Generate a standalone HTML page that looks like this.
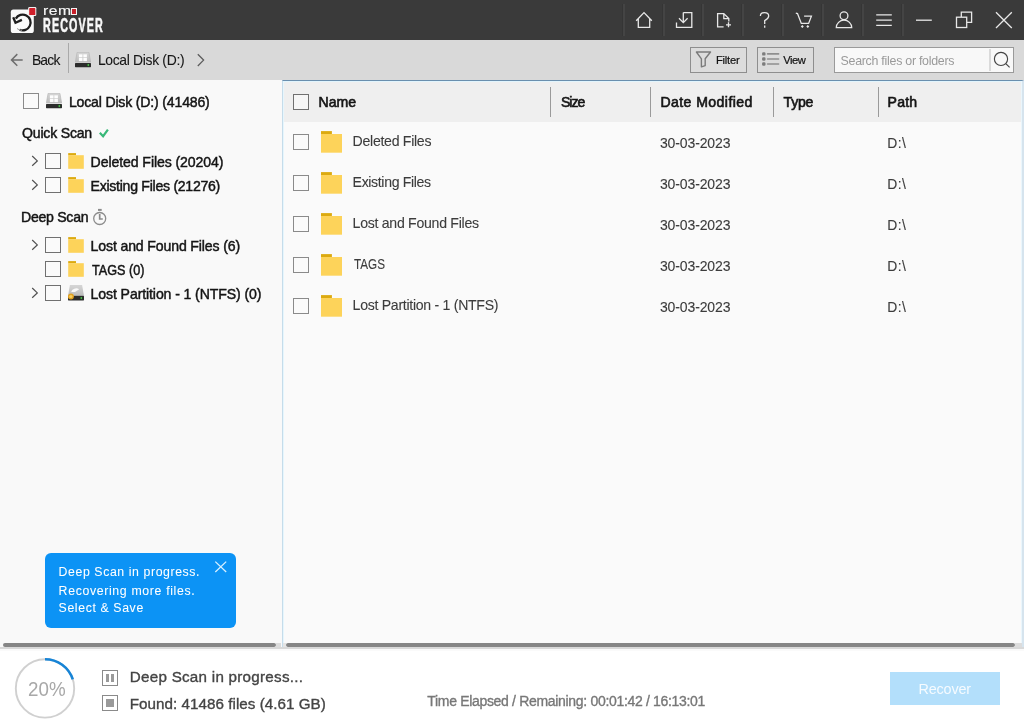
<!DOCTYPE html>
<html><head><meta charset="utf-8">
<style>
*{margin:0;padding:0;box-sizing:border-box}
html,body{width:1024px;height:728px;overflow:hidden;background:#fff;font-family:"Liberation Sans",sans-serif}
#wrap{position:absolute;left:0;top:0;width:1024px;height:728px;will-change:transform}
.a{position:absolute}
.t{position:absolute;white-space:nowrap;line-height:20px}
#top{left:0;top:0;width:1024px;height:40px;background:#3a3a3a}
.sep{position:absolute;top:4px;width:2px;height:32px;background:#444;box-shadow:-1px 0 0 #353535}
#tool{left:0;top:40px;width:1024px;height:40px;background:#d9d9d9}
#left{left:0;top:80px;width:282px;height:569px;background:#f9f9f9}
#right{left:282px;top:80px;width:742px;height:569px;background:#fafafa;border-left:1px solid #c6dcea;border-top:1px solid #6a8fae;border-right:2px solid #d6e4ee}
#hdr{left:284px;top:82px;width:737px;height:40px;background:#efefef}
.cb{position:absolute;width:16px;height:16px;border:1px solid #8a8a8a;background:#fafafa}
.hsep{position:absolute;top:87px;width:1px;height:30px;background:#9a9a9a}
.hd{position:absolute;font-weight:bold;font-size:13.6px;color:#1e1e1e;white-space:nowrap;line-height:20px}
.rn{position:absolute;font-size:13.5px;color:#3a3a3a;white-space:nowrap;line-height:20px}
.dt{position:absolute;font-size:14px;color:#3a3a3a;white-space:nowrap;line-height:20px}
.tr{position:absolute;font-size:13.6px;color:#1a1a1a;white-space:nowrap;line-height:20px;-webkit-text-stroke:0.2px #1a1a1a}
.fold{position:absolute;width:22px;height:22px}
.chev{position:absolute}
</style></head><body><div id="wrap">

<!-- top bar -->
<div id="top" class="a"></div>
<div class="sep" style="left:623px"></div>
<div class="sep" style="left:663px"></div>
<div class="sep" style="left:702px"></div>
<div class="sep" style="left:742px"></div>
<div class="sep" style="left:782px"></div>
<div class="sep" style="left:822px"></div>
<div class="sep" style="left:862px"></div>
<div class="sep" style="left:902px"></div>

<!-- logo -->
<svg class="a" style="left:0;top:0" width="120" height="40" viewBox="0 0 120 40">
  <rect x="10.8" y="9.6" width="23" height="23.4" rx="2.6" fill="#fafafa"/>
  <rect x="28.2" y="7.1" width="8.1" height="8.9" rx="1.2" fill="#f2f2f2"/>
  <rect x="29.2" y="8.1" width="6.1" height="6.9" rx="0.6" fill="#cf1f2a"/>
  <path d="M15.8 18.6 A7.9 7.9 0 1 1 19.6 29.8" fill="none" stroke="#1e1e1e" stroke-width="2.3"/>
  <path d="M13.2 17.3 L15.5 22.7 L21.9 19.9" fill="none" stroke="#1e1e1e" stroke-width="2.3" stroke-linejoin="miter"/>
  <path d="M17 28.5 Q19 30.2 22 30.4" fill="none" stroke="#9a9a9a" stroke-width="1"/>
</svg>
<div class="t" style="left:43.3px;top:1.3px;font-size:12.6px;color:#f6f6f6;line-height:20px;transform:scaleX(1.25);transform-origin:0 0;-webkit-text-stroke:0.15px #f6f6f6;letter-spacing:0.4px">rem</div>
<div class="a" style="left:71.3px;top:7.7px;width:6.2px;height:7.1px;border:1.2px solid #f4f4f4;background:#c8202a"></div>
<div class="t" style="left:43px;top:12.6px;font-size:19.4px;font-weight:bold;color:#f8f8f8;line-height:24px;transform:scaleX(0.555);transform-origin:0 0;-webkit-text-stroke:0.55px #f8f8f8;letter-spacing:2px">RECOVER</div>

<!-- top icons -->
<svg class="a" style="left:600px;top:0" width="424" height="40" viewBox="600 0 424 40" fill="none" stroke="#e8e8e8" stroke-width="1.3">
  <!-- home -->
  <path d="M636.2 20.8 L644 12.6 L651.8 20.8 M638.3 18.6 V27.4 H649.7 V18.6"/>
  <!-- download box -->
  <path d="M683.3 12.6 H691.8 V27.4 H676.5 V22.6"/>
  <path d="M683.3 12.6 V22.6 M679 18.3 L683.3 22.6 L687.6 18.3"/>
  <!-- file plus -->
  <path d="M723.6 26.8 H717.6 V13.6 H723.8 L728.8 18.6 V21.4 M723.8 13.6 V18.6 H728.8"/>
  <path d="M728.5 22.3 V27.2 M726 24.8 H731"/>
  <!-- question -->
  <path d="M760.4 16 Q760.4 12.6 764.5 12.6 Q768.7 12.6 768.7 16 Q768.7 18.4 764.7 20.6 V24"/>
  <path d="M764.7 25.6 V27.8"/>
  <!-- cart -->
  <path d="M795.8 13.1 L797.5 13.5 L801.3 23.4 H808.6 L811.4 16.2 H804.1"/>
  <path d="M802.3 25.1 L803.8 26.6 L802.3 28.1 L800.8 26.6 Z M807.8 25.1 L809.3 26.6 L807.8 28.1 L806.3 26.6 Z" fill="#e8e8e8" stroke="none"/>
  <!-- person -->
  <circle cx="844" cy="15.8" r="3.9"/>
  <path d="M836.3 27.6 A7.7 7.4 0 0 1 851.7 27.6 Z"/>
  <!-- menu -->
  <path d="M876.2 14.9 H891.8 M876.2 20.1 H891.8 M876.2 25.3 H891.8"/>
  <!-- minimize -->
  <path d="M916 20.2 H931.8"/>
  <!-- restore -->
  <path d="M961.3 17 V12.2 H971.6 V22.4 H966.8"/>
  <rect x="956.5" y="17.2" width="10.2" height="10.3"/>
  <!-- close -->
  <path d="M996 12.2 L1011.8 28 M1011.8 12.2 L996 28"/>
</svg>

<!-- toolbar -->
<div id="tool" class="a"></div>
<svg class="a" style="left:0;top:40px" width="220" height="40" viewBox="0 40 220 40" fill="none">
  <path d="M22.7 59.9 H12 M17.3 54.1 L11.5 59.9 L17.3 65.7" stroke="#6e6e6e" stroke-width="1.5"/>
  <path d="M197.8 54.2 L203.6 60.1 L197.8 66" stroke="#5c5c5c" stroke-width="1.3"/>
</svg>
<div class="a" style="left:68px;top:43px;width:1px;height:30px;background:#a9a9a9"></div>
<!-- disk icon toolbar -->
<svg class="a" style="left:75.1px;top:52px" width="16" height="16" viewBox="0 0 16 16">
  <defs><linearGradient id="dg1" x1="0" y1="0" x2="0" y2="1"><stop offset="0" stop-color="#d6d6d6"/><stop offset="1" stop-color="#bdbdbd"/></linearGradient></defs>
  <path d="M2.1 0.3 H13.9 L15.7 10.1 H0.3 Z" fill="url(#dg1)" stroke="#b4b4b4" stroke-width="0.6"/>
  <rect x="3.9" y="2.3" width="3.6" height="3.1" fill="#fdfdfd"/>
  <rect x="8.3" y="2.3" width="3.6" height="3.1" fill="#fdfdfd"/>
  <rect x="3.9" y="6" width="3.6" height="3.1" fill="#fdfdfd"/>
  <rect x="8.3" y="6" width="3.6" height="3.1" fill="#fdfdfd"/>
  <rect x="0" y="11" width="16" height="4.2" rx="0.6" fill="#2c2c2c"/>
  <circle cx="13.3" cy="13.1" r="1.3" fill="#1f5f1f"/>
  <circle cx="13.3" cy="13.1" r="0.75" fill="#6fdc6f"/>
</svg>

<!-- filter / view -->
<div class="a" style="left:690px;top:47px;width:57px;height:26px;border:1px solid #8e8e8e;background:#dcdcdc"></div>
<svg class="a" style="left:694px;top:50px" width="20" height="20" viewBox="694 50 20 20" fill="none" stroke="#7a7a7a" stroke-width="1.4">
  <path d="M696.4 52 H710.5 L705.2 58.8 V65.6 L701.4 66.8 V58.8 Z" stroke-linejoin="round"/>
</svg>
<div class="a" style="left:757px;top:47px;width:57px;height:26px;border:1px solid #8e8e8e;background:#dcdcdc"></div>
<svg class="a" style="left:760px;top:50px" width="22" height="20" viewBox="760 50 22 20">
  <rect x="762.1" y="52.2" width="3.4" height="3.4" rx="1.2" fill="#7c7c7c"/>
  <rect x="762.1" y="57.3" width="3.4" height="3.4" rx="1.2" fill="#7c7c7c"/>
  <rect x="762.1" y="62.3" width="3.4" height="3.4" rx="1.2" fill="#7c7c7c"/>
  <path d="M767.6 53.9 H778.6 M767.6 59 H778.6 M767.6 64 H778.6" stroke="#8e8e8e" stroke-width="1.6" stroke-linecap="round"/>
</svg>

<!-- search -->
<div class="a" style="left:834px;top:47px;width:180px;height:26px;border:1px solid #9a9a9a;background:#f8f8f8"></div>
<div class="a" style="left:989.2px;top:49px;width:1.6px;height:22px;background:#dadada"></div>
<svg class="a" style="left:990px;top:48px" width="24" height="24" viewBox="990 48 24 24" fill="none" stroke="#444" stroke-width="1.15">
  <circle cx="1001" cy="58.9" r="6.6"/>
  <path d="M1005.8 63.6 L1009.6 67.4"/>
</svg>

<!-- panels -->
<div id="left" class="a"></div>
<div id="right" class="a"></div>
<div id="hdr" class="a"></div>
<div class="a" style="left:283px;top:81px;width:739px;height:1px;background:#e2f5fd"></div>
<div class="a" style="left:283px;top:81px;width:1px;height:562px;background:#e6f6fd"></div>
<div class="a" style="left:1021px;top:81px;width:1px;height:562px;background:#eaf6fc"></div>

<!-- left tree -->
<div class="cb" style="left:23px;top:93px;border-color:#8a8a8a"></div>
<svg class="a" style="left:46px;top:93px" width="16" height="16" viewBox="0 0 16 16">
  <defs><linearGradient id="dg2" x1="0" y1="0" x2="0" y2="1"><stop offset="0" stop-color="#d6d6d6"/><stop offset="1" stop-color="#bdbdbd"/></linearGradient></defs>
  <path d="M2.1 0.3 H13.9 L15.7 10.1 H0.3 Z" fill="url(#dg2)" stroke="#b4b4b4" stroke-width="0.6"/>
  <rect x="3.9" y="2.3" width="3.6" height="3.1" fill="#fdfdfd"/>
  <rect x="8.3" y="2.3" width="3.6" height="3.1" fill="#fdfdfd"/>
  <rect x="3.9" y="6" width="3.6" height="3.1" fill="#fdfdfd"/>
  <rect x="8.3" y="6" width="3.6" height="3.1" fill="#fdfdfd"/>
  <rect x="0" y="11" width="16" height="4.2" rx="0.6" fill="#2c2c2c"/>
  <circle cx="13.3" cy="13.1" r="1.3" fill="#1f5f1f"/>
  <circle cx="13.3" cy="13.1" r="0.75" fill="#6fdc6f"/>
</svg>

<svg class="a" style="left:98px;top:127px" width="12" height="12" viewBox="0 0 12 12"><path d="M1.8 5.8 L5.1 9.2 L9.9 2.7" fill="none" stroke="#38b878" stroke-width="2.2"/></svg>

<svg class="a" style="left:30px;top:150px" width="10" height="155" viewBox="30 150 10 155" fill="none" stroke="#505050" stroke-width="1.2">
  <path d="M32.2 156 L37.3 160.9 L32.2 165.8"/>
  <path d="M32.2 180 L37.3 184.9 L32.2 189.8"/>
  <path d="M32.2 240 L37.3 244.9 L32.2 249.8"/>
  <path d="M32.2 288 L37.3 292.9 L32.2 297.8"/>
</svg>

<div class="cb" style="left:45px;top:153px;border-color:#707070"></div>
<svg class="a" style="left:66px;top:152px" width="20" height="20" viewBox="66 152 20 20"><rect x="68.2" y="153.1" width="7.8" height="2.2" fill="#dcaa10"/><rect x="68.2" y="155.2" width="15.6" height="13.6" fill="#fdd35a"/></svg>

<div class="cb" style="left:45px;top:177px;border-color:#707070"></div>
<svg class="a" style="left:66px;top:176px" width="20" height="20" viewBox="66 176 20 20"><rect x="68.2" y="177.1" width="7.8" height="2.2" fill="#dcaa10"/><rect x="68.2" y="179.2" width="15.6" height="13.6" fill="#fdd35a"/></svg>

<svg class="a" style="left:92px;top:208px" width="16" height="18" viewBox="0 0 16 18" fill="none" stroke="#8c8c8c" stroke-width="1.3">
  <circle cx="7.7" cy="10.5" r="6"/>
  <rect x="6" y="0.9" width="3.7" height="2" fill="#8c8c8c" stroke="none"/>
  <path d="M7.7 6 V11 H10.8" stroke-width="1.7"/>
</svg>

<div class="cb" style="left:45px;top:237px;border-color:#707070"></div>
<svg class="a" style="left:66px;top:236px" width="20" height="20" viewBox="66 236 20 20"><rect x="68.2" y="237.1" width="7.8" height="2.2" fill="#dcaa10"/><rect x="68.2" y="239.2" width="15.6" height="13.6" fill="#fdd35a"/></svg>

<div class="cb" style="left:45px;top:261px;border-color:#707070"></div>
<svg class="a" style="left:66px;top:260px" width="20" height="20" viewBox="66 260 20 20"><rect x="68.2" y="261.1" width="7.8" height="2.2" fill="#dcaa10"/><rect x="68.2" y="263.2" width="15.6" height="13.6" fill="#fdd35a"/></svg>

<div class="cb" style="left:45px;top:285px;border-color:#707070"></div>
<svg class="a" style="left:68px;top:285px" width="16" height="16" viewBox="0 0 16 16">
  <defs><linearGradient id="dg3" x1="0" y1="0" x2="0" y2="1"><stop offset="0" stop-color="#d6d6d6"/><stop offset="1" stop-color="#bdbdbd"/></linearGradient></defs>
  <path d="M1.9 0 H14.1 L16 10.8 H0 Z" fill="url(#dg3)"/>
  <path d="M3.2 7 A5 4.2 0 0 1 11.2 4.2 L7 7 Z" fill="#fafafa"/>
  <rect x="0" y="10.8" width="16" height="4.6" rx="0.6" fill="#2c2c2c"/>
  <circle cx="13.3" cy="13.1" r="1.3" fill="#1f5f1f"/>
  <circle cx="13.3" cy="13.1" r="0.75" fill="#6fdc6f"/>
  <circle cx="2.9" cy="11.5" r="3" fill="#e0a020"/>
  <circle cx="2.9" cy="11.5" r="1.6" fill="#f8d060"/>
</svg>

<!-- header -->
<div class="cb" style="left:293px;top:94px;border-color:#707070;background:#f6f6f6"></div>
<div class="hsep" style="left:550px"></div>
<div class="hsep" style="left:650px"></div>
<div class="hsep" style="left:773px"></div>
<div class="hsep" style="left:878px"></div>

<!-- rows -->
<div class="cb" style="left:293px;top:134px"></div>
<svg class="a" style="left:319px;top:130px" width="25" height="25" viewBox="319 130 25 25"><rect x="321" y="131.1" width="10.9" height="2.9" fill="#dcaa10"/><rect x="321" y="134" width="21" height="18.7" fill="#fdd35a"/></svg>

<div class="cb" style="left:293px;top:175px"></div>
<svg class="a" style="left:319px;top:171px" width="25" height="25" viewBox="319 171 25 25"><rect x="321" y="172.1" width="10.9" height="2.9" fill="#dcaa10"/><rect x="321" y="175" width="21" height="18.7" fill="#fdd35a"/></svg>

<div class="cb" style="left:293px;top:216px"></div>
<svg class="a" style="left:319px;top:212px" width="25" height="25" viewBox="319 212 25 25"><rect x="321" y="213.1" width="10.9" height="2.9" fill="#dcaa10"/><rect x="321" y="216" width="21" height="18.7" fill="#fdd35a"/></svg>

<div class="cb" style="left:293px;top:257px"></div>
<svg class="a" style="left:319px;top:253px" width="25" height="25" viewBox="319 253 25 25"><rect x="321" y="254.1" width="10.9" height="2.9" fill="#dcaa10"/><rect x="321" y="257" width="21" height="18.7" fill="#fdd35a"/></svg>

<div class="cb" style="left:293px;top:298px"></div>
<svg class="a" style="left:319px;top:294px" width="25" height="25" viewBox="319 294 25 25"><rect x="321" y="295.1" width="10.9" height="2.9" fill="#dcaa10"/><rect x="321" y="298" width="21" height="18.7" fill="#fdd35a"/></svg>

<!-- tooltip -->
<div class="a" style="left:45.2px;top:553.2px;width:190.6px;height:74.4px;background:#0c93f5;border-radius:6px"></div>
<svg class="a" style="left:213px;top:560px" width="15" height="14" viewBox="213 560 15 14" fill="none" stroke="#d8f0ff" stroke-width="1.3">
  <path d="M215.3 561.6 L226.2 572 M226.2 561.6 L215.3 572"/>
</svg>

<!-- scrollbars -->
<div class="a" style="left:276px;top:643px;width:5px;height:4px;background:#dcdcdc"></div>
<div class="a" style="left:283px;top:643px;width:3px;height:4px;background:#e4e4e4"></div>
<div class="a" style="left:1015px;top:643px;width:7px;height:4px;background:#dcdcdc"></div>
<div class="a" style="left:0;top:647px;width:1024px;height:2px;background:#d9d9d9"></div>
<div class="a" style="left:3px;top:643.4px;width:273px;height:3.6px;background:#868686;border-radius:2px"></div>
<div class="a" style="left:286px;top:643.4px;width:729px;height:3.6px;background:#868686;border-radius:2px"></div>

<!-- bottom -->
<div class="a" style="left:0;top:649px;width:1024px;height:79px;background:#fff"></div>
<div class="a" style="left:0;top:649px;width:1024px;height:2px;background:#fafafa"></div>
<svg class="a" style="left:10px;top:653px" width="72" height="72" viewBox="10 653 72 72">
  <circle cx="45" cy="688.4" r="29.2" fill="none" stroke="#d0d0d0" stroke-width="1.9"/>
  <path d="M45 659.2 A29.2 29.2 0 0 1 72.77 679.38" fill="none" stroke="#1784d6" stroke-width="2.6"/>
</svg>

<div class="a" style="left:102px;top:670px;width:16px;height:16px;border:1px solid #8a8a8a"></div>
<div class="a" style="left:106px;top:674px;width:3px;height:8px;background:#9a9a9a"></div>
<div class="a" style="left:111px;top:674px;width:3px;height:8px;background:#9a9a9a"></div>
<div class="a" style="left:102px;top:695px;width:16px;height:16px;border:1px solid #8a8a8a"></div>
<div class="a" style="left:106px;top:699px;width:8px;height:8px;background:#9a9a9a"></div>


<div class="a" style="left:890px;top:672px;width:110px;height:33px;background:#b3dffb"></div>

<div class="t" style="left:31.9px;top:50.0px;font-size:13.9px;color:#161616;-webkit-text-stroke:0.08px #161616;letter-spacing:-0.8px">Back</div>
<div class="t" style="left:97.9px;top:50.0px;font-size:13.9px;color:#161616;-webkit-text-stroke:0.08px #161616;letter-spacing:-0.314px">Local Disk (D:)</div>
<div class="t" style="left:715.9px;top:49.9px;font-size:11.2px;color:#111;-webkit-text-stroke:0.2px #111;letter-spacing:-0.2px">Filter</div>
<div class="t" style="left:783.2px;top:49.9px;font-size:11.2px;color:#111;-webkit-text-stroke:0.2px #111;letter-spacing:-0.467px">View</div>
<div class="t" style="left:840.5px;top:50.8px;font-size:12.4px;color:#9a9a9a;letter-spacing:-0.263px">Search files or folders</div>
<div class="t" style="left:68.9px;top:92.0px;font-size:14.1px;color:#141414;-webkit-text-stroke:0.45px #141414;letter-spacing:-0.182px">Local Disk (D:) (41486)</div>
<div class="t" style="left:22.1px;top:122.8px;font-size:14.1px;color:#141414;-webkit-text-stroke:0.45px #141414;letter-spacing:-0.222px">Quick Scan</div>
<div class="t" style="left:90.6px;top:152.0px;font-size:14.1px;color:#141414;-webkit-text-stroke:0.45px #141414;letter-spacing:-0.09px">Deleted Files (20204)</div>
<div class="t" style="left:90.6px;top:176.0px;font-size:14.1px;color:#141414;-webkit-text-stroke:0.45px #141414;letter-spacing:-0.276px">Existing Files (21276)</div>
<div class="t" style="left:21.0px;top:206.8px;font-size:14.1px;color:#141414;-webkit-text-stroke:0.45px #141414;letter-spacing:-0.275px">Deep Scan</div>
<div class="t" style="left:90.6px;top:236.0px;font-size:14.1px;color:#141414;-webkit-text-stroke:0.45px #141414;letter-spacing:-0.139px">Lost and Found Files (6)</div>
<div class="t" style="left:91.6px;top:260.0px;font-size:14.1px;color:#141414;-webkit-text-stroke:0.45px #141414;transform:scaleX(0.8983);transform-origin:0 0">TAGS (0)</div>
<div class="t" style="left:90.6px;top:284.0px;font-size:14.1px;color:#141414;-webkit-text-stroke:0.45px #141414;letter-spacing:-0.107px">Lost Partition - 1 (NTFS) (0)</div>
<div class="t" style="left:318.6px;top:91.8px;font-size:14.1px;color:#141414;-webkit-text-stroke:0.6px #141414;letter-spacing:-0.067px">Name</div>
<div class="t" style="left:561.0px;top:91.8px;font-size:14.1px;color:#141414;-webkit-text-stroke:0.6px #141414;letter-spacing:-1.067px">Size</div>
<div class="t" style="left:660.4px;top:91.8px;font-size:14.1px;color:#141414;-webkit-text-stroke:0.6px #141414;letter-spacing:0.417px">Date Modified</div>
<div class="t" style="left:783.6px;top:91.8px;font-size:14.1px;color:#141414;-webkit-text-stroke:0.6px #141414;letter-spacing:-0.266px">Type</div>
<div class="t" style="left:887.6px;top:91.8px;font-size:14.1px;color:#141414;-webkit-text-stroke:0.6px #141414;letter-spacing:0.2px">Path</div>
<div class="t" style="left:352.6px;top:130.9px;font-size:14.1px;color:#3c3c3c;-webkit-text-stroke:0.1px #3c3c3c;letter-spacing:-0.284px">Deleted Files</div>
<div class="t" style="left:659.9px;top:132.9px;font-size:14.0px;color:#3c3c3c;-webkit-text-stroke:0.1px #3c3c3c;letter-spacing:-0.112px">30-03-2023</div>
<div class="t" style="left:887.2px;top:132.9px;font-size:13.9px;color:#3c3c3c;-webkit-text-stroke:0.1px #3c3c3c;letter-spacing:0.5px">D:\</div>
<div class="t" style="left:352.6px;top:171.9px;font-size:14.1px;color:#3c3c3c;-webkit-text-stroke:0.1px #3c3c3c;letter-spacing:-0.354px">Existing Files</div>
<div class="t" style="left:659.9px;top:173.9px;font-size:14.0px;color:#3c3c3c;-webkit-text-stroke:0.1px #3c3c3c;letter-spacing:-0.112px">30-03-2023</div>
<div class="t" style="left:887.2px;top:173.9px;font-size:13.9px;color:#3c3c3c;-webkit-text-stroke:0.1px #3c3c3c;letter-spacing:0.5px">D:\</div>
<div class="t" style="left:352.6px;top:212.9px;font-size:14.1px;color:#3c3c3c;-webkit-text-stroke:0.1px #3c3c3c;letter-spacing:-0.273px">Lost and Found Files</div>
<div class="t" style="left:659.9px;top:214.9px;font-size:14.0px;color:#3c3c3c;-webkit-text-stroke:0.1px #3c3c3c;letter-spacing:-0.112px">30-03-2023</div>
<div class="t" style="left:887.2px;top:214.9px;font-size:13.9px;color:#3c3c3c;-webkit-text-stroke:0.1px #3c3c3c;letter-spacing:0.5px">D:\</div>
<div class="t" style="left:353.6px;top:253.9px;font-size:14.1px;color:#3c3c3c;-webkit-text-stroke:0.1px #3c3c3c;transform:scaleX(0.8297);transform-origin:0 0">TAGS</div>
<div class="t" style="left:659.9px;top:255.9px;font-size:14.0px;color:#3c3c3c;-webkit-text-stroke:0.1px #3c3c3c;letter-spacing:-0.112px">30-03-2023</div>
<div class="t" style="left:887.2px;top:255.9px;font-size:13.9px;color:#3c3c3c;-webkit-text-stroke:0.1px #3c3c3c;letter-spacing:0.5px">D:\</div>
<div class="t" style="left:352.6px;top:294.9px;font-size:14.1px;color:#3c3c3c;-webkit-text-stroke:0.1px #3c3c3c;letter-spacing:-0.284px">Lost Partition - 1 (NTFS)</div>
<div class="t" style="left:659.9px;top:296.9px;font-size:14.0px;color:#3c3c3c;-webkit-text-stroke:0.1px #3c3c3c;letter-spacing:-0.112px">30-03-2023</div>
<div class="t" style="left:887.2px;top:296.9px;font-size:13.9px;color:#3c3c3c;-webkit-text-stroke:0.1px #3c3c3c;letter-spacing:0.5px">D:\</div>
<div class="t" style="left:58.6px;top:561.7px;font-size:12.3px;color:#fff;-webkit-text-stroke:0.05px #fff;letter-spacing:0.591px">Deep Scan in progress.</div>
<div class="t" style="left:58.6px;top:580.7px;font-size:12.3px;color:#fff;-webkit-text-stroke:0.05px #fff;letter-spacing:0.657px">Recovering more files.</div>
<div class="t" style="left:58.6px;top:598.4px;font-size:12.3px;color:#fff;-webkit-text-stroke:0.05px #fff;letter-spacing:0.616px">Select &amp; Save</div>
<div class="t" style="left:129.8px;top:666.8px;font-size:15.2px;color:#444;-webkit-text-stroke:0.35px #444;letter-spacing:0.261px">Deep Scan in progress...</div>
<div class="t" style="left:129.8px;top:694.0px;font-size:15.2px;color:#444;-webkit-text-stroke:0.35px #444;letter-spacing:0.037px">Found: 41486 files (4.61 GB)</div>
<div class="t" style="left:427.3px;top:690.8px;font-size:14.0px;color:#777;-webkit-text-stroke:0.35px #777;letter-spacing:-0.319px">Time Elapsed / Remaining: 00:01:42 / 16:13:01</div>
<div class="t" style="left:918.6px;top:678.8px;font-size:14.4px;color:#f6fbff;letter-spacing:-0.2px">Recover</div>
<div class="t" style="left:27.8px;top:678.7px;font-size:19.6px;color:#a8a8a8;transform:scaleX(0.9579);transform-origin:0 0">20%</div>
</div></body></html>
